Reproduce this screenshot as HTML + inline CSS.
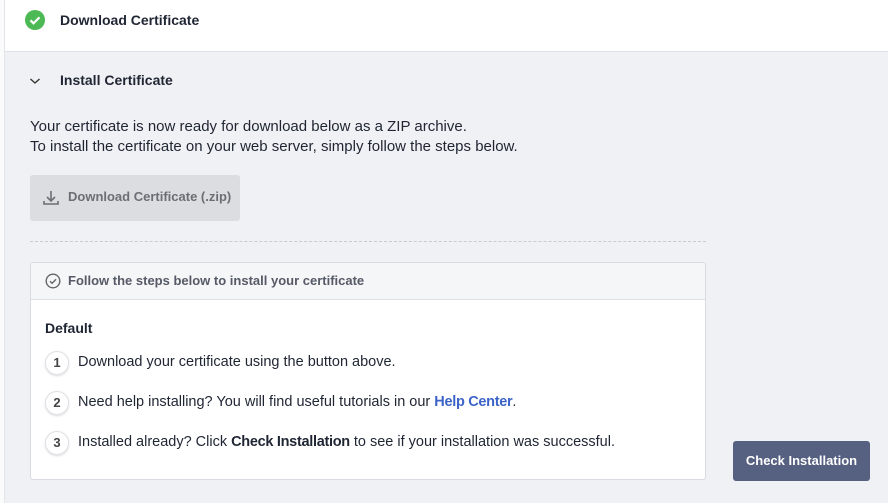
<!DOCTYPE html>
<html><head><meta charset="utf-8"><style>
*{box-sizing:border-box;margin:0;padding:0}
body{width:888px;height:503px;overflow:hidden;background:#f0f1f4;font-family:"Liberation Sans",sans-serif;color:#1f2533;position:relative}
.leftstrip{position:absolute;left:0;top:0;width:5px;height:503px;background:#fbfbfc;border-right:1px solid #e3e5ea}
.top{position:absolute;left:5px;top:0;width:883px;height:52px;background:#fff;border-bottom:1px solid #dde0e6}
.t{position:absolute;font-size:14px}
.b{font-weight:bold}
.dl{position:absolute;left:30px;top:175px;width:210px;height:46px;background:#dcdde0;border-radius:3px;color:#6b6e75;font-size:13px;font-weight:bold}
.dash{position:absolute;left:30px;top:241px;width:676px;border-top:1px dashed #c8cbd2}
.card{position:absolute;left:30px;top:262px;width:676px;height:218px;background:#fff;border:1px solid #d8dbe1;border-radius:3px;overflow:hidden}
.ch{height:37px;background:#f5f6f8;border-bottom:1px solid #dcdfe5;font-size:13px;font-weight:bold;color:#555a66;position:relative}
.num{position:absolute;left:14px;width:24px;height:24px;border-radius:50%;border:1px solid #dde0e5;box-shadow:0 1px 2px rgba(0,0,0,.15);text-align:center;line-height:22px;font-size:13px;font-weight:bold;color:#444}
.st{position:absolute;left:47px;font-size:14.5px;white-space:nowrap}
.st b{letter-spacing:-0.3px}
.btn{position:absolute;left:733px;top:441px;width:137px;height:40px;background:#566080;border-radius:3px;color:#fff;font-size:13px;font-weight:bold;text-align:center;line-height:40px}
</style></head><body>
<div class="leftstrip"></div>
<div class="top">
<svg style="position:absolute;left:20px;top:10px" width="20" height="20" viewBox="0 0 20 20"><circle cx="10" cy="10" r="10" fill="#4cb955"/><path d="M5.5 10.3l3 3 6-6" stroke="#fff" stroke-width="2.2" fill="none"/></svg>
<div class="t b" style="left:55px;top:12px">Download Certificate</div>
</div>
<svg style="position:absolute;left:29px;top:77px" width="12" height="8" viewBox="0 0 12 8"><path d="M1.5 2l4.5 4 4.5-4" stroke="#333" stroke-width="1.4" fill="none"/></svg>
<div class="t b" style="left:60px;top:72px">Install Certificate</div>
<div class="t" style="left:30px;top:117px;line-height:20px;font-size:15px;white-space:nowrap">Your certificate is now ready for download below as a ZIP archive.<br>To install the certificate on your web server, simply follow the steps below.</div>
<div class="dl">
<svg style="position:absolute;left:12px;top:14px" width="18" height="17" viewBox="0 0 18 17"><path d="M9 2v10M5 8l4 4 4-4M2 12v3h14v-3" stroke="#6b6e75" stroke-width="1.6" fill="none"/></svg>
<div style="position:absolute;left:38px;top:14px">Download Certificate (.zip)</div>
</div>
<div class="dash"></div>
<div class="card">
<div class="ch">
<svg style="position:absolute;left:14px;top:10px" width="16" height="16" viewBox="0 0 16 16"><circle cx="8" cy="8" r="6.8" stroke="#666" stroke-width="1.4" fill="none"/><path d="M5 8.2l2.1 2.1 4-4" stroke="#666" stroke-width="1.4" fill="none"/></svg>
<div style="position:absolute;left:37px;top:10px">Follow the steps below to install your certificate</div>
</div>
<div class="t b" style="left:14px;top:57px">Default</div>
<div class="num" style="top:88px">1</div><div class="st" style="top:91px">Download your certificate using the button above.</div>
<div class="num" style="top:128px">2</div><div class="st" style="top:131px">Need help installing? You will find useful tutorials in our <b style="color:#3c64c8">Help Center</b>.</div>
<div class="num" style="top:168px">3</div><div class="st" style="top:171px">Installed already? Click <b>Check Installation</b> to see if your installation was successful.</div>
</div>
<div class="btn">Check Installation</div>
</body></html>
